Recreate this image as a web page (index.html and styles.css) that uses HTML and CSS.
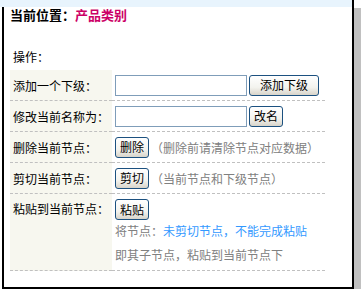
FILE: index.html
```html
<!DOCTYPE html>
<html lang="zh-CN">
<head>
  <meta charset="UTF-8">
  <title>产品类别</title>
  <link rel="stylesheet" href="styles.css">
</head>
<body>
  <div class="frame">
    <div class="topbar"></div>
    <div class="title">当前位置：<span class="current">产品类别</span></div>
    <div class="ops">操作：</div>
    <table class="op-table">
      <tr>
        <td class="label">添加一个下级：</td>
        <td class="field">
          <div class="line">
            <input type="text" class="txt">
            <button class="btn btn-wide">添加下级</button>
          </div>
        </td>
      </tr>
      <tr>
        <td class="label">修改当前名称为：</td>
        <td class="field">
          <div class="line">
            <input type="text" class="txt">
            <button class="btn">改名</button>
          </div>
        </td>
      </tr>
      <tr>
        <td class="label">删除当前节点：</td>
        <td class="field">
          <div class="line">
            <button class="btn">删除</button>
            <span class="note">（删除前请清除节点对应数据）</span>
          </div>
        </td>
      </tr>
      <tr>
        <td class="label">剪切当前节点：</td>
        <td class="field">
          <div class="line">
            <button class="btn">剪切</button>
            <span class="note">（当前节点和下级节点）</span>
          </div>
        </td>
      </tr>
      <tr class="paste-row">
        <td class="label">粘贴到当前节点：</td>
        <td class="field">
          <div class="line">
            <button class="btn">粘贴</button>
          </div>
          <p class="paste-note">将节点：<span class="warn">未剪切节点，不能完成粘贴</span><br>即其子节点，粘贴到当前节点下</p>
        </td>
      </tr>
    </table>
  </div>
</body>
</html>
```

FILE: styles.css
```css
body {
  margin: 0;
  padding: 0;
  background-color: #ffffff;
  font-family: "Noto Sans CJK SC", "Noto Sans", sans-serif;
  font-size: 12px;
  color: #000000;
}
.frame {
  box-sizing: border-box;
  width: 352px;
  height: 289px;
  margin-left: 2px;
  border: 2px solid #000000;
  border-top: none;
  background-color: #ffffff;
  box-shadow: 8px 8px 0 #c0c0c0;
}
.topbar {
  height: 7px;
  margin-left: -4px;
  background-color: #e8f4fd;
}
.title {
  margin-top: 1px;
  padding-left: 6px;
  font-size: 13px;
  font-weight: bold;
  line-height: 14px;
}
.current {
  color: #cc0066;
}
.ops {
  margin-top: 27px;
  padding-left: 9px;
  line-height: 16px;
}
.op-table {
  margin: 5px 0 0 6px;
  width: 315px;
  border-collapse: collapse;
}
.op-table td {
  padding: 0;
  border-bottom: 1px dashed #c0c0c0;
}
.label {
  width: 99px;
  height: 30px;
  padding-left: 3px !important;
  background-color: #f7f7ef;
  white-space: nowrap;
}
.field {
  padding-left: 3px !important;
}
.line {
  display: flex;
  align-items: center;
  gap: 2px;
}
.txt {
  box-sizing: border-box;
  width: 132px;
  height: 21px;
  margin: 0;
  border: 1px solid #7f9db9;
  padding: 0 2px;
  font-family: inherit;
  font-size: 12px;
}
.btn {
  box-sizing: border-box;
  height: 21px;
  margin: 0;
  padding: 0 4px;
  border: 1px solid #1c5180;
  border-radius: 3px;
  background: linear-gradient(to bottom, #ffffff, #f3f3ee 60%, #d8d4ca);
  font-family: inherit;
  font-size: 12px;
  line-height: 18px;
  color: #000000;
}
.btn-wide {
  padding: 0 10px;
}
.note {
  color: #808080;
  white-space: nowrap;
}
.paste-row .label {
  vertical-align: top;
  padding-top: 5px !important;
  line-height: 20px;
}
.paste-row .field {
  vertical-align: top;
  padding-top: 5px !important;
  padding-bottom: 3px !important;
}
.paste-note {
  margin: -1px 0 0;
  line-height: 24px;
  color: #808080;
  white-space: nowrap;
}
.warn {
  color: #3399ff;
}
```
